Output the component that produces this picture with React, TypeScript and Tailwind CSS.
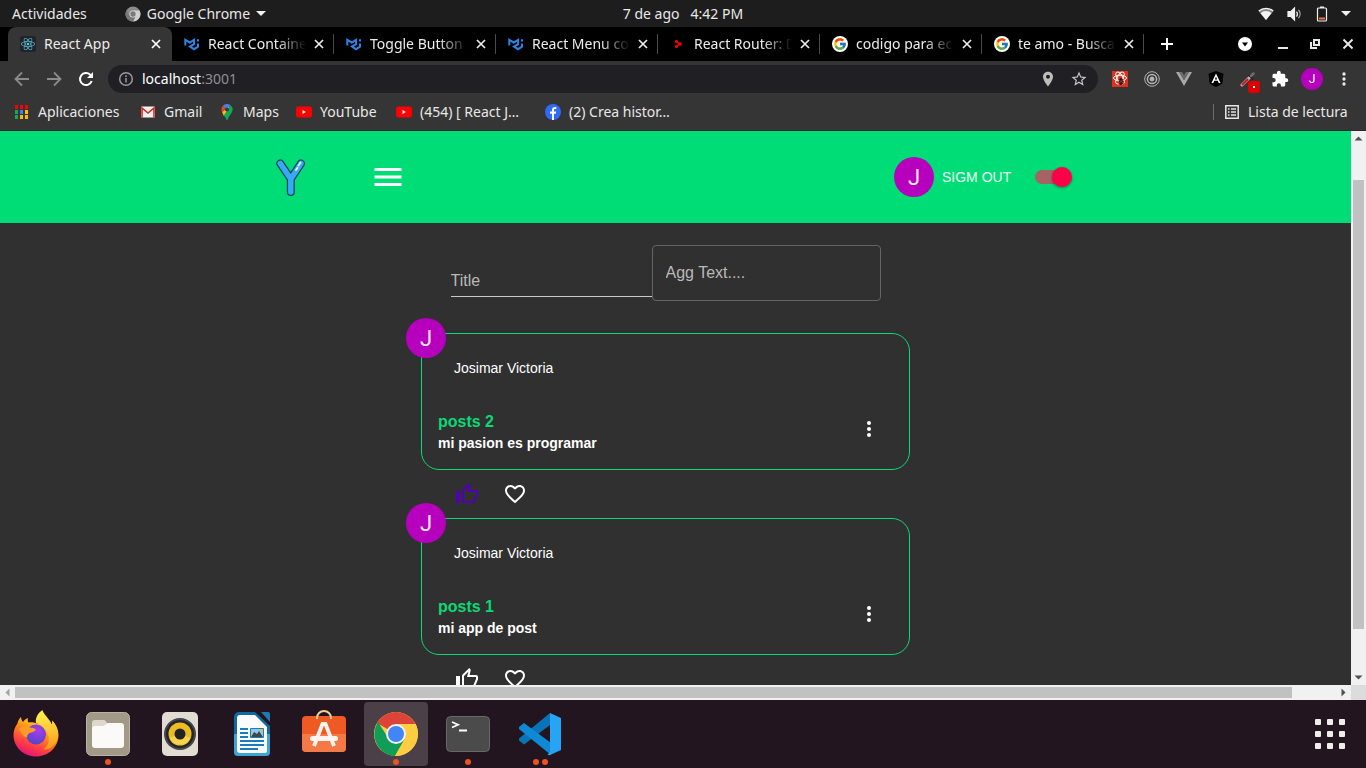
import type { ReactNode } from 'react';
import { FaReact } from 'react-icons/fa';
import { FcGoogle } from 'react-icons/fc';

function MuiIcon() {
  return (
    <svg viewBox="0 0 16 16" className="size-4" fill="none" stroke="#2b84e6" strokeWidth="2">
      <path d="M1.300 9.500V3.800L5.800 6.600l4.300-2.800v4.400L6 10.600l4 2.600 4-2.500V7.500" />
      <path d="M14 5.500V3.200" />
    </svg>
  );
}

function ReactIcon() {
  return (
    <span className="flex size-4 items-center justify-center rounded-xs bg-[#20232a]">
      <FaReact className="size-[14px] text-[#61c5dd]" />
    </span>
  );
}

function RouterIcon() {
  return (
    <svg viewBox="0 0 16 16" className="size-4" fill="#f00000">
      <rect x="5" y="4" width="3" height="3" rx="1" />
      <rect x="7.500" y="6.300" width="4" height="3.400" rx="1" />
      <rect x="5" y="9" width="3" height="3" rx="1" />
    </svg>
  );
}

function GoogleIcon() {
  return (
    <span className="flex size-4 items-center justify-center rounded-full bg-white">
      <FcGoogle className="size-[14px]" />
    </span>
  );
}

function CloseIcon() {
  return (
    <svg viewBox="0 0 16 16" className="size-4" fill="none" stroke="currentColor" strokeWidth="1.700">
      <path d="M4 4l8 8m0-8l-8 8" />
    </svg>
  );
}

function DotsIcon({ className }: { className: string }) {
  return (
    <svg viewBox="0 0 24 24" className={className} fill="currentColor">
      <circle cx="12" cy="6" r="2" />
      <circle cx="12" cy="12" r="2" />
      <circle cx="12" cy="18" r="2" />
    </svg>
  );
}

function SystemBar() {
  return (
    <div className="grid h-[27px] shrink-0 grid-cols-3 items-center bg-[#1d1d1d] px-3 text-[#e8e8e8]">
      <div className="flex items-center gap-[38px]">
        <button type="button">Actividades</button>
        <button type="button" className="flex items-center gap-[6px]">
          <svg viewBox="0 0 16 16" className="size-4">
            <circle cx="8" cy="8" r="7.500" fill="#8b8b8b" />
            <path d="M8 4.500h6.600A7.500 7.500 0 0 1 8 15.500l3-5.700z" fill="#cfcfcf" />
            <path d="M1.500 4.200A7.500 7.500 0 0 0 8 15.500l2-4-5-1z" fill="#777" />
            <circle cx="8" cy="8" r="3.600" fill="#d8d8d8" />
            <circle cx="8" cy="8" r="2.700" fill="#7b7b7b" />
          </svg>
          Google Chrome
          <svg viewBox="0 0 10 5" className="h-[5px] w-[10px]" fill="#f0f0f0">
            <path d="M0 0h10L5 5z" />
          </svg>
        </button>
      </div>
      <div className="flex justify-center gap-[11px]">
        <span>7 de ago</span>
        <span>4:42 PM</span>
      </div>
      <div className="flex items-center justify-end gap-[13px] pr-[3px]">
        <svg viewBox="0 0 16 14" className="h-[14px] w-4">
          <path d="M.5 4a11 11 0 0 1 15 0L8 13z" fill="#8a8a8a" />
          <path d="M2.500 6.200a8 8 0 0 1 11 0L8 13z" fill="#f4f4f4" />
          <path d="M.8 4a11 11 0 0 1 14.400 0" fill="none" stroke="#f4f4f4" strokeWidth="1.300" />
        </svg>
        <svg viewBox="0 0 16 16" className="size-4" fill="none" stroke="#f0f0f0" strokeWidth="1.200">
          <path d="M1 5.500h3L7.500 2v12L4 10.500H1z" fill="#f0f0f0" />
          <path d="M9.500 5.500a4 4 0 0 1 0 5" />
          <path d="M11.500 3.800a6.500 6.500 0 0 1 0 8.400" stroke="#b0b0b0" />
        </svg>
        <svg viewBox="0 0 12 16" className="h-4 w-3">
          <path d="M4 .5h4v1.500H4z" fill="#f0f0f0" />
          <rect x="1.500" y="2" width="9" height="13" rx="1" fill="none" stroke="#f0f0f0" strokeWidth="1.200" />
          <path d="M3 11.500h6v2H3z" fill="#f4713b" />
        </svg>
        <svg viewBox="0 0 10 5" className="h-[5px] w-[10px]" fill="#f0f0f0">
          <path d="M0 0h10L5 5z" />
        </svg>
      </div>
    </div>
  );
}

const backgroundTabs: { title: string; icon: ReactNode }[] = [
  { title: 'React Container', icon: <MuiIcon /> },
  { title: 'Toggle Button', icon: <MuiIcon /> },
  { title: 'React Menu co', icon: <MuiIcon /> },
  { title: 'React Router: D', icon: <RouterIcon /> },
  { title: 'codigo para ec', icon: <GoogleIcon /> },
  { title: 'te amo - Busca', icon: <GoogleIcon /> },
];

function TabStrip() {
  return (
    <div className="flex h-[34px] shrink-0 items-stretch bg-black pl-2 text-[#ececec]">
      <div className="flex w-[164px] shrink-0 items-center rounded-t-lg bg-[#353535] pr-2 pl-3">
        <ReactIcon />
        <span className="ml-2 flex-1">React App</span>
        <button type="button" aria-label="Cerrar" className="text-white">
          <CloseIcon />
        </button>
      </div>
      {backgroundTabs.map((tab) => (
        <div key={tab.title} className="flex w-[162px] min-w-0 items-center pl-3">
          <span className="shrink-0">{tab.icon}</span>
          <span className="ml-2 w-[98px] overflow-hidden whitespace-nowrap [mask-image:linear-gradient(to_right,black_70%,transparent)]">
            {tab.title}
          </span>
          <button type="button" aria-label="Cerrar" className="ml-[5px]">
            <CloseIcon />
          </button>
          <span className="ml-auto h-5 w-px shrink-0 bg-[#4a4a4a]" />
        </div>
      ))}
      <button type="button" aria-label="Nueva pestaña" className="ml-[15px] text-white">
        <svg viewBox="0 0 16 16" className="size-4" fill="none" stroke="currentColor" strokeWidth="2">
          <path d="M2 8h12M8 2v12" />
        </svg>
      </button>
      <div className="ml-auto flex items-center pr-[10px]">
        <button type="button" aria-label="Buscar pestañas" className="mr-[23px]">
          <svg viewBox="0 0 14 14" className="size-[14px]">
            <circle cx="7" cy="7" r="7" fill="white" />
            <path d="M4 5.500h6L7 9.500z" fill="black" />
          </svg>
        </button>
        <button type="button" aria-label="Minimizar" className="mr-4">
          <svg viewBox="0 0 16 16" className="size-4" fill="#e6e6e6">
            <path d="M3 11h10v2H3z" />
          </svg>
        </button>
        <button type="button" aria-label="Restaurar" className="mr-[17px]">
          <svg viewBox="0 0 16 16" className="size-4" fill="none" stroke="#e6e6e6" strokeWidth="2">
            <path d="M7 4h5v5H7z" />
            <path d="M4 6v6h6" />
          </svg>
        </button>
        <button type="button" aria-label="Cerrar ventana">
          <svg viewBox="0 0 16 16" className="size-4" fill="none" stroke="#e6e6e6" strokeWidth="2">
            <path d="M3.500 3.500l9 9m0-9l-9 9" />
          </svg>
        </button>
      </div>
    </div>
  );
}

function ToolButton({ label, children }: { label: string; children: ReactNode }) {
  return (
    <button type="button" aria-label={label} className="flex size-8 shrink-0 items-center justify-center">
      {children}
    </button>
  );
}

function Toolbar() {
  return (
    <div className="flex h-9 shrink-0 items-center bg-[#353535] px-[6px]">
      <ToolButton label="Atrás">
        <svg viewBox="0 0 16 16" className="size-4" fill="none" stroke="#8b8b8b" strokeWidth="1.800">
          <path d="M15 8H2M8 1.500L1.500 8 8 14.500" />
        </svg>
      </ToolButton>
      <ToolButton label="Adelante">
        <svg viewBox="0 0 16 16" className="size-4" fill="none" stroke="#8b8b8b" strokeWidth="1.800">
          <path d="M1 8h13M8 1.500L14.500 8 8 14.500" />
        </svg>
      </ToolButton>
      <ToolButton label="Recargar">
        <svg viewBox="0 0 16 16" className="size-4" fill="none" stroke="white" strokeWidth="2">
          <path d="M13.700 10A6 6 0 1 1 12.200 3.700L14 5.500" />
          <path d="M15 1v6H9z" fill="white" stroke="none" />
        </svg>
      </ToolButton>
      <div className="mx-[6px] flex h-7 flex-1 items-center rounded-full bg-[#202024] px-[10px]">
        <svg viewBox="0 0 16 16" className="size-4" fill="none" stroke="#9a9a9e" strokeWidth="1.500">
          <circle cx="8" cy="8" r="6.300" />
          <path d="M8 7v4.500M8 4.300v1.700" />
        </svg>
        <a href="#localhost" className="ml-2 flex-1 text-[#8f8f93]">
          <span className="text-white">localhost</span>:3001
        </a>
        <svg viewBox="0 0 24 24" className="mr-[14px] size-4" fill="#bdbdbd">
          <path d="M12 1C7.600 1 4.500 4.400 4.500 8.500 4.500 14 12 23 12 23s7.500-9 7.500-14.500C19.500 4.400 16.400 1 12 1zm0 10.500a3 3 0 1 1 0-6 3 3 0 0 1 0 6z" />
        </svg>
        <svg viewBox="0 0 24 24" className="size-[18px]" fill="#c4c4c4">
          <path d="M22 9.240l-7.190-.62L12 2 9.190 8.630 2 9.240l5.460 4.730L5.820 21 12 17.270 18.180 21l-1.630-7.030L22 9.240zM12 15.400l-3.760 2.270 1-4.280-3.320-2.880 4.380-.38L12 6.100l1.710 4.040 4.380.38-3.320 2.880 1 4.280L12 15.400z" />
        </svg>
      </div>
      <ToolButton label="React Developer Tools">
        <span className="flex size-4 items-center justify-center bg-[#e0301e]">
          <svg viewBox="0 0 16 16" className="size-4" fill="none" stroke="white">
            <ellipse cx="8" cy="7" rx="6.500" ry="2.800" />
            <ellipse cx="8" cy="7" rx="6.500" ry="2.800" transform="rotate(60 8 7)" />
            <ellipse cx="8" cy="7" rx="6.500" ry="2.800" transform="rotate(120 8 7)" />
            <ellipse cx="9" cy="10.500" rx="2" ry="3" fill="#1d1d1d" stroke="#1d1d1d" />
            <path d="M6 8l6 5M12 8l-6 5" stroke="#e0301e" strokeWidth=".8" />
          </svg>
        </span>
      </ToolButton>
      <ToolButton label="Redux">
        <svg viewBox="0 0 16 16" className="size-4" fill="none" stroke="#b5b5b5">
          <circle cx="8" cy="8" r="7.300" />
          <circle cx="8" cy="8" r="4.600" strokeWidth="1.500" />
          <circle cx="8" cy="8" r="2" fill="#b5b5b5" />
        </svg>
      </ToolButton>
      <ToolButton label="Vue">
        <svg viewBox="0 0 16 14" className="h-[14px] w-4">
          <path d="M0 0h3.200L8 8.300 12.800 0H16L8 14z" fill="#a9a9a9" />
          <path d="M3.200 0h3L8 3.200 9.800 0h3L8 8.300z" fill="#6c6c6c" />
        </svg>
      </ToolButton>
      <ToolButton label="Angular">
        <svg viewBox="0 0 16 16" className="size-4">
          <path d="M8 0l7.500 2.700-1.100 10L8 16l-6.400-3.300-1.100-10z" fill="black" />
          <path d="M8 2.500L3.500 12h1.800l.9-2.200h3.600l.9 2.200h1.800zm0 3.200l1.200 2.800H6.800z" fill="white" />
        </svg>
      </ToolButton>
      <ToolButton label="ColorZilla">
        <span className="relative size-4">
          <svg viewBox="0 0 16 16" className="size-4" strokeLinecap="round" fill="none">
            <path d="M2 14L9.500 6.500" stroke="#bdbdbd" strokeWidth="3" />
            <path d="M2.500 13.500l5-5" stroke="#d31313" strokeWidth="2" />
            <path d="M9 4.500l3.500 3.500" stroke="#222" strokeWidth="1.500" />
            <path d="M11 5l2.500-2.500" stroke="#6e6e6e" strokeWidth="2.500" />
          </svg>
          <span className="absolute top-[10px] left-2 flex size-3 items-center justify-center rounded-xs bg-[#dd0000]">
            <span className="size-[2px] bg-white" />
          </span>
        </span>
      </ToolButton>
      <ToolButton label="Extensiones">
        <svg viewBox="0 0 24 24" className="size-[18px]" fill="white">
          <path d="M20.500 11H19V7c0-1.100-.9-2-2-2h-4V3.500a2.500 2.500 0 0 0-5 0V5H4c-1.100 0-1.990.9-1.990 2v3.800H3.500c1.490 0 2.700 1.210 2.700 2.700s-1.210 2.700-2.700 2.700H2V20c0 1.100.9 2 2 2h3.800v-1.500c0-1.490 1.210-2.700 2.700-2.700 1.490 0 2.700 1.210 2.700 2.700V22H17c1.100 0 2-.9 2-2v-4h1.500a2.500 2.500 0 0 0 0-5z" />
        </svg>
      </ToolButton>
      <ToolButton label="Perfil">
        <span className="flex size-[22px] items-center justify-center rounded-full bg-[#b600bd] font-[Roboto,sans-serif] text-xs text-white">J</span>
      </ToolButton>
      <ToolButton label="Menú">
        <DotsIcon className="size-5 text-[#ececec]" />
      </ToolButton>
    </div>
  );
}

function YoutubeIcon() {
  return (
    <svg viewBox="0 0 16 16" className="size-4">
      <rect y="2.500" width="16" height="11" rx="2.500" fill="#f00" />
      <path d="M6.500 6v4L10 8z" fill="white" />
    </svg>
  );
}

const appColors = ['#f00', '#f00', '#f00', '#0fa958', '#3f7ef5', '#fbbc05', '#0fa958', '#fbbc05', '#fbbc05'];

function Bookmarks() {
  const item = 'flex shrink-0 items-center gap-2 whitespace-nowrap';
  return (
    <nav className="flex h-[34px] shrink-0 items-center border-b border-[#2a2a2a] bg-[#353535] pr-[14px] pb-1 pl-[14px] text-[#e8e8e8]">
      <a href="#apps" className={`${item} w-[126px]`}>
        <svg viewBox="0 0 16 16" className="size-4">
          {appColors.map((color, i) => (
            <rect key={i} x={1 + (i % 3) * 5} y={1 + Math.floor(i / 3) * 5} width="3" height="4" fill={color} />
          ))}
        </svg>
        Aplicaciones
      </a>
      <a href="#gmail" className={`${item} w-[79px]`}>
        <svg viewBox="0 0 16 16" className="size-4">
          <rect x="1" y="2.500" width="14" height="11" rx="1" fill="#f1f1f1" />
          <path d="M2 13.500V4l6 5 6-5v9.500" fill="none" stroke="#dd2c23" strokeWidth="1.600" />
        </svg>
        Gmail
      </a>
      <a href="#maps" className={`${item} w-[77px]`}>
        <svg viewBox="0 0 16 16" className="size-4">
          <path d="M8 0a5.500 5.500 0 0 0-4.300 2L8 5.700l3.500-4.500A5.500 5.500 0 0 0 8 0z" fill="#4a7df0" />
          <path d="M3.700 2a5.500 5.500 0 0 0-.6 6L7 4z" fill="#ea4335" />
          <path d="M3.100 8L10 2.500l-1.200 6-4 3.500z" fill="#fbbc04" />
          <path d="M11.500 1.200A5.600 5.600 0 0 1 13 8c-1 2.500-3.700 4-4.200 7.500-.2.700-1.200.7-1.500 0-.4-1.500-1.500-2.700-2.500-3.900z" fill="#12a85a" />
          <circle cx="8" cy="5.500" r="2" fill="#343a4a" />
        </svg>
        Maps
      </a>
      <a href="#youtube" className={`${item} w-[100px]`}>
        <YoutubeIcon />
        YouTube
      </a>
      <a href="#react" className={`${item} w-[149px]`}>
        <YoutubeIcon />
        (454) [ React J…
      </a>
      <a href="#facebook" className={item}>
        <svg viewBox="0 0 16 16" className="size-4">
          <circle cx="8" cy="8" r="8" fill="#2f6bf6" />
          <path d="M7 16V9.800H5V7.500h2V6c0-2 1.200-3 3-3h1.300v2H10.200C9.300 5 9 5.400 9 6.100v1.400h2.200l-.4 2.300H9V16z" fill="white" />
        </svg>
        (2) Crea histor…
      </a>
      <div className="ml-auto flex w-[139px] items-center">
        <span className="mr-[10px] h-4 w-px bg-[#6a6a6a]" />
        <button type="button" className="flex items-center gap-2 whitespace-nowrap">
          <svg viewBox="0 0 16 16" className="size-4" fill="none" stroke="#e6e6e6" strokeWidth="1.500">
            <path d="M1.800 1.800h12.400v12.400H1.800zM4 5h1.500M7 5h5M4 8h1.500M7 8h5M4 11h1.500M7 11h5" />
          </svg>
          Lista de lectura
        </button>
      </div>
    </nav>
  );
}

function Avatar() {
  return (
    <span className="flex size-10 shrink-0 items-center justify-center rounded-full bg-[#b600bd] pt-px font-[Roboto,sans-serif] text-[22px] leading-none text-[#fae8fb]">
      J
    </span>
  );
}

function AppHeader() {
  return (
    <header className="h-[92px] bg-[#00dd77]">
      <div className="mx-auto flex h-full w-full max-w-[799px] items-center">
        <svg viewBox="0 0 30 40" className="h-10 w-[30px]" strokeLinecap="round" strokeLinejoin="round" fill="none">
          <path d="M4.300 6.500L14.800 22 25 6.500M14.800 22v13" stroke="#12445c" strokeWidth="8" />
          <path d="M4.300 6.500L14.800 22 25 6.500M14.800 22v13" stroke="#38aaf5" strokeWidth="5.500" />
          <path d="M20 13l1.500-2.300M22.500 8.500l2-3" stroke="#e4f5ff" strokeWidth="1.800" />
        </svg>
        <button type="button" aria-label="Menu" className="ml-16 text-white">
          <svg viewBox="0 0 24 24" className="size-9" fill="currentColor">
            <path d="M3 18h18v-2H3v2zm0-5h18v-2H3v2zm0-7v2h18V6H3z" />
          </svg>
        </button>
        <div className="ml-auto flex items-center">
          <Avatar />
          <button type="button" className="ml-2 w-[93px] text-left text-sm text-[#edfff5]">
            SIGM OUT
          </button>
          <label className="relative mr-[3px] flex h-5 w-[37px] items-center">
            <input type="checkbox" defaultChecked aria-label="Dark mode" className="absolute inset-0 z-10 opacity-0" />
            <span className="h-[14px] w-[34px] rounded-full bg-[#a66363]" />
            <span className="absolute right-0 size-5 rounded-full bg-[#ff0048] shadow-[0_1px_3px_rgba(0,0,0,0.4)]" />
          </label>
        </div>
      </div>
    </header>
  );
}

const posts = [
  { title: 'posts 2', text: 'mi pasion es programar', liked: true },
  { title: 'posts 1', text: 'mi app de post', liked: false },
];

function Post({ title, text, liked }: { title: string; text: string; liked: boolean }) {
  return (
    <article className="w-full text-white">
      <div className="relative flex h-[137px] flex-col rounded-[18px] border border-[#0bd876] px-4 pt-6">
        <div className="absolute -top-4 -left-4">
          <Avatar />
        </div>
        <p className="pl-4 text-sm leading-5">Josimar Victoria</p>
        <div className="mt-8 flex items-center justify-between">
          <div>
            <h2 className="text-base leading-6 font-bold text-[#0bd876]">{title}</h2>
            <p className="text-sm leading-[18px] font-bold">{text}</p>
          </div>
          <button type="button" aria-label="Opciones" className="mr-3 mb-1">
            <DotsIcon className="size-6" />
          </button>
        </div>
      </div>
      <div className="flex h-12 items-center gap-6 pl-[34px]">
        <button type="button" aria-label="Me gusta" className={liked ? 'text-[#5200b8]' : 'text-white'}>
          <svg viewBox="0 0 24 24" className="size-6" fill="currentColor">
            <path d="M9 21h9c.83 0 1.540-.5 1.840-1.220l3.020-7.050c.09-.23.140-.47.140-.73v-2c0-1.100-.9-2-2-2h-6.310l.95-4.570.03-.32c0-.41-.17-.79-.44-1.060L14.170 1 7.580 7.590C7.220 7.950 7 8.450 7 9v10c0 1.100.9 2 2 2zM9 9l4.340-4.340L12 10h9v2l-3 7H9V9zM1 9h4v12H1z" />
          </svg>
        </button>
        <button type="button" aria-label="Favorito">
          <svg viewBox="0 0 24 24" className="size-6" fill="currentColor">
            <path d="M16.500 3c-1.740 0-3.410.81-4.500 2.090C10.910 3.810 9.240 3 7.500 3 4.420 3 2 5.420 2 8.500c0 3.780 3.400 6.860 8.550 11.540L12 21.350l1.450-1.320C18.600 15.360 22 12.280 22 8.500 22 5.420 19.580 3 16.500 3zm-4.400 15.550l-.1.100-.1-.1C7.140 14.240 4 11.390 4 8.500 4 6.500 5.500 5 7.500 5c1.540 0 3.040.99 3.570 2.360h1.870C13.460 5.990 14.960 5 16.500 5c2 0 3.500 1.500 3.500 3.500 0 2.890-3.140 5.740-7.900 10.050z" />
          </svg>
        </button>
      </div>
    </article>
  );
}

function AppPage() {
  return (
    <main className="min-w-0 flex-1 overflow-hidden bg-[#303030] font-['Liberation_Sans',Arial,sans-serif]">
      <AppHeader />
      <div className="flex flex-col items-center pt-[22px] pr-5">
        <form className="mb-8 flex items-start">
          <input
            aria-label="Title"
            placeholder="Title"
            className="mt-5 h-8 w-[201px] border-b border-[#c8c8c8] text-base text-white outline-none placeholder:text-[#b9b9b9]"
          />
          <input
            aria-label="Agg Text"
            placeholder="Agg Text...."
            className="h-14 w-[229px] rounded-sm border border-[#646464] px-[13px] text-base text-white outline-none placeholder:text-[#b9b9b9]"
          />
        </form>
        <div className="w-full max-w-[489px]">
          {posts.map((post) => (
            <Post key={post.title} {...post} />
          ))}
        </div>
      </div>
    </main>
  );
}

function Arrow({ path, color }: { path: string; color: string }) {
  return (
    <svg viewBox="0 0 15 15" className="size-[15px] shrink-0" fill={color}>
      <path d={path} />
    </svg>
  );
}

function Dock() {
  const icon = 'size-12';
  const apps: { name: string; dots: number; active?: boolean; art: ReactNode }[] = [
    {
      name: 'Firefox',
      dots: 0,
      art: (
        <svg viewBox="0 0 48 48" className={icon}>
          <defs>
            <linearGradient id="fox" x1=".8" y1="0" x2=".3" y2="1">
              <stop offset="0" stopColor="#fff44f" />
              <stop offset=".4" stopColor="#ff980e" />
              <stop offset=".75" stopColor="#ff3b47" />
              <stop offset="1" stopColor="#e0117d" />
            </linearGradient>
            <radialGradient id="globe" cx=".6" cy=".3" r=".8">
              <stop offset="0" stopColor="#a83cf0" />
              <stop offset="1" stopColor="#4a46c8" />
            </radialGradient>
            <linearGradient id="flame" x1=".5" y1="0" x2=".6" y2="1">
              <stop offset="0" stopColor="#fff44f" />
              <stop offset="1" stopColor="#ff9a1c" />
            </linearGradient>
          </defs>
          <path d="M24 46.500C11.500 46.500 1.500 37 1.500 25c0-4.500 1.500-8.500 4-11.500.2-2 1.500-4.500 3.500-6.500.2 2 .8 3.700 2 5 1.300-1.800 3-3.300 5-4-.5 1.800-.3 3 .5 4.500 2.500-.6 5.500-.3 7.500.8L40 14c.5-1 .3-2.500 0-3.500 4 4 6.500 9 6.500 14.500 0 12-10 21.500-22.500 21.500z" fill="url(#fox)" />
          <circle cx="24" cy="24.500" r="10" fill="url(#globe)" />
          <path d="M24 13c-1-5 2-10 6.500-13 1 4 4.500 6.500 7.500 11 1 1.500 1.700 3 2 4.500.5-1.500.3-3 0-5 4.500 4.500 6.500 10 5.500 17-1.500 7.500-7 12-14 12 4-3 6-7 5-13-.6-4-3-6-5-9-2-2-4-4-7.500-4.500z" fill="url(#flame)" />
          <path d="M7 19c3-3 8-3.500 11-1.500 2.500.2 4.500.7 6 2-1.500 2.500-4 3-6.500 3.500-1.500 1-2.500 2.300-2.300 4.500C10 26 9 22 7 19z" fill="#ff9a28" />
        </svg>
      ),
    },
    {
      name: 'Archivos',
      dots: 1,
      art: (
        <svg viewBox="0 0 48 48" className={icon}>
          <rect x="2.500" y="2.500" width="43" height="43" rx="5" fill="#a29a86" stroke="#b9b3a3" />
          <path d="M8 13a3 3 0 0 1 3-3h9c2 0 3 4 5 4h-3v6H8z" fill="#ddd8ca" />
          <path d="M8 19a3 3 0 0 1 3-3h8l5-3h13a3 3 0 0 1 3 3v19a3 3 0 0 1-3 3H11a3 3 0 0 1-3-3z" fill="#fbfaf9" />
        </svg>
      ),
    },
    {
      name: 'Rhythmbox',
      dots: 0,
      art: (
        <svg viewBox="0 0 48 48" className={icon}>
          <rect x="6" y="2" width="36" height="44" rx="5" fill="#e1ddd2" />
          <circle cx="24" cy="24" r="16" fill="#45474c" />
          <circle cx="24" cy="24" r="14" fill="#25262b" />
          <circle cx="24" cy="24" r="11.500" fill="#edbb22" />
          <path d="M13.500 28a11.500 11.500 0 0 0 21 0L24 24z" fill="#f6d34b" />
          <circle cx="24" cy="24" r="5.500" fill="#222323" />
        </svg>
      ),
    },
    {
      name: 'LibreOffice Writer',
      dots: 0,
      art: (
        <svg viewBox="0 0 48 48" className={icon}>
          <path d="M11 2h16l15 14v26a4 4 0 0 1-4 4H10a4 4 0 0 1-4-4V7a5 5 0 0 1 5-5z" fill="#0f6aa3" />
          <path d="M6 24h36v18a4 4 0 0 1-4 4H10a4 4 0 0 1-4-4z" fill="#3fa3d6" />
          <path d="M33 2h7a2 2 0 0 1 2 2v8z" fill="#1e79b4" />
          <path d="M12 5h15l12 12v24a2 2 0 0 1-2 2H12a3 3 0 0 1-3-3V8a3 3 0 0 1 3-3z" fill="#fbfbfb" />
          <path d="M12 19h8M12 23h8M12 27h8M12 31h24M12 35h24M12 39h18" stroke="#187eb8" strokeWidth="2" />
          <path d="M22.500 18.500h13v9h-13z" fill="#8bc9f0" stroke="#187eb8" />
          <path d="M23 27l3-5 3 2 2-3 4 6z" fill="#454545" />
          <path d="M31 19h4v3z" fill="#f7bb21" />
        </svg>
      ),
    },
    {
      name: 'Ubuntu Software',
      dots: 0,
      art: (
        <svg viewBox="0 0 48 48" className={icon}>
          <rect x="2" y="6" width="44" height="36" rx="4" fill="#ef5a24" />
          <path d="M2 24h44v14a4 4 0 0 1-4 4H6a4 4 0 0 1-4-4z" fill="#f37a48" />
          <path d="M17 9V8a7 7 0 0 1 14 0v1" fill="none" stroke="#f2cf93" strokeWidth="2" />
          <path d="M14 36l8.500-22h3L34 36" fill="none" stroke="#fff5ee" strokeWidth="3.800" />
          <rect x="10" y="26" width="28" height="5" rx="2.500" fill="#fff5ee" />
        </svg>
      ),
    },
    {
      name: 'Google Chrome',
      dots: 1,
      active: true,
      art: (
        <svg viewBox="0 0 48 48" className={icon}>
          <circle cx="24" cy="24" r="22" fill="#ffcd40" />
          <path d="M24 24L4.950 13A22 22 0 0 1 43.600 14H24z" fill="#dc4437" />
          <path d="M6 12A22 22 0 0 0 23 46l10-17-9-2-9-1z" fill="#109d58" />
          <path d="M24 14h19.600c3 6 3 12 1 17A22 22 0 0 1 23 46l9.700-17z" fill="#ffcd40" />
          <circle cx="24" cy="24" r="10" fill="#f1f1f1" />
          <circle cx="24" cy="24" r="8" fill="#4285f4" />
        </svg>
      ),
    },
    {
      name: 'Terminal',
      dots: 1,
      art: (
        <svg viewBox="0 0 48 48" className={icon}>
          <rect x="2.500" y="6.500" width="43" height="35" rx="4" fill="#4b4b4b" stroke="#686868" />
          <path d="M8 12l6 2.800L8 17.500M15 20.500h8" fill="none" stroke="white" strokeWidth="1.800" />
        </svg>
      ),
    },
    {
      name: 'Visual Studio Code',
      dots: 2,
      art: (
        <svg viewBox="0 0 48 48" className={icon}>
          <path d="M34 3v12L8 34.500l-5-4v-2z" fill="#0873b9" />
          <path d="M3 17l5-4 27 20v12L3 19z" fill="#1089d5" />
          <path d="M34 3l11 5v32l-11 5c-1 .5-2 0-2.500-.5L34 42z" fill="#25a5f3" />
        </svg>
      ),
    },
  ];
  return (
    <footer className="flex h-[68px] shrink-0 items-center bg-[#23151f] pr-[21px]">
      {apps.map((app) => (
        <button key={app.name} type="button" aria-label={app.name} className="flex w-[72px] justify-center">
          <span className={`flex h-16 w-16 flex-col items-center justify-end rounded ${app.active ? 'bg-[#4b3f48]' : ''}`}>
            {app.art}
            <span className="flex h-2 items-start gap-[3px] pt-px">
              {Array.from({ length: app.dots }, (_, i) => (
                <span key={i} className="size-[6px] rounded-full bg-[#e95420]" />
              ))}
            </span>
          </span>
        </button>
      ))}
      <button type="button" aria-label="Mostrar aplicaciones" className="ml-auto grid grid-cols-3 gap-[6px]">
        {Array.from({ length: 9 }, (_, i) => (
          <span key={i} className="size-[6px] rounded-[1px] bg-[#f0eeeb]" />
        ))}
      </button>
    </footer>
  );
}

export default function App() {
  return (
    <div className="flex h-screen flex-col overflow-hidden bg-[#303030] font-['Noto_Sans',sans-serif] text-sm">
      <SystemBar />
      <TabStrip />
      <Toolbar />
      <Bookmarks />
      <div className="flex min-h-0 flex-1">
        <AppPage />
        <div className="flex w-[15px] shrink-0 flex-col items-center bg-[#f1f1f1]">
          <Arrow path="M3.500 9.500h8l-4-4z" color="#505050" />
          <div className="h-[34px]" />
          <div className="w-[11px] flex-1 bg-[#c1c1c1]" />
          <div className="h-[41px]" />
          <Arrow path="M3.500 5.500h8l-4 4z" color="#505050" />
        </div>
      </div>
      <div className="flex h-[15px] shrink-0 items-center bg-[#f1f1f1]">
        <Arrow path="M9.500 3.500v8l-4-4z" color="#a3a3a3" />
        <div className="h-[11px] flex-1 bg-[#c1c1c1]" />
        <div className="w-11" />
        <Arrow path="M5.500 3.500v8l4-4z" color="#505050" />
        <div className="size-[15px] bg-[#dcdcdc]" />
      </div>
      <Dock />
    </div>
  );
}
